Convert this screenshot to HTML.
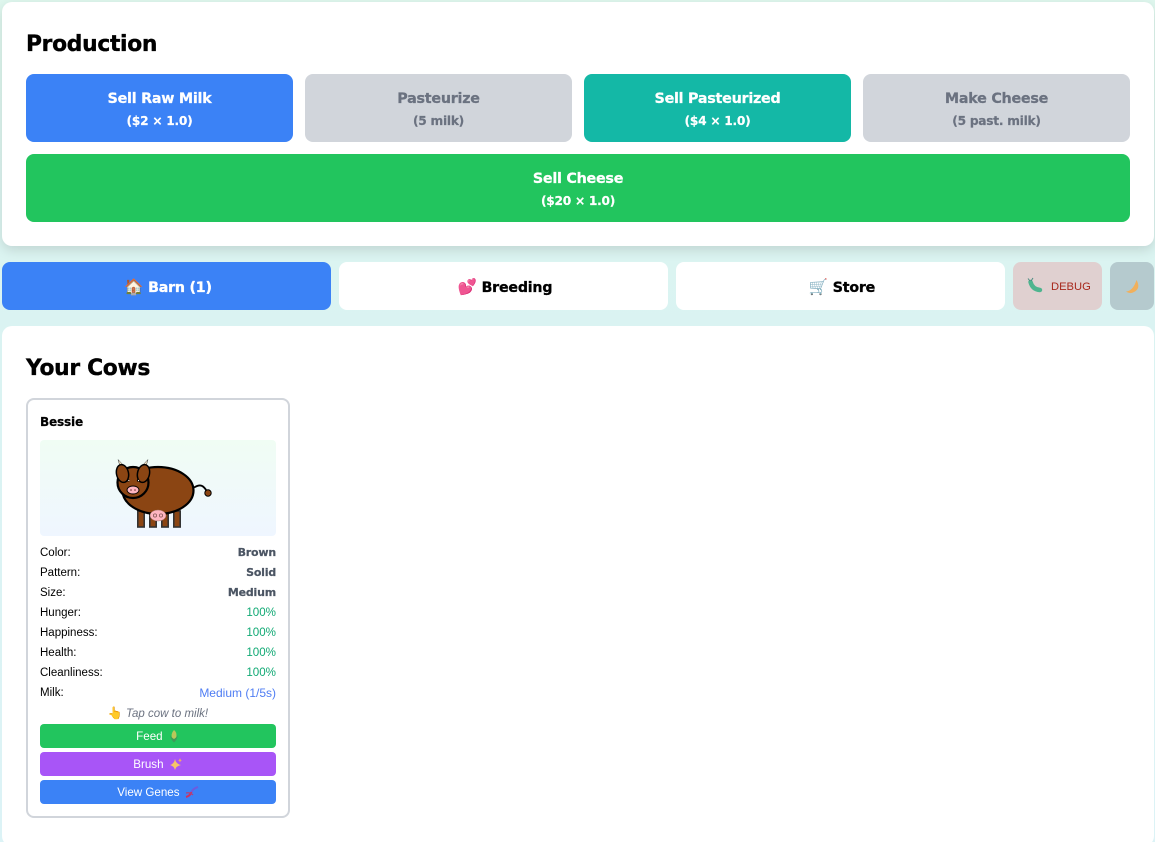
<!DOCTYPE html>
<html lang="en">
<head>
<meta charset="utf-8">
<title>Production</title>
<style>
*{box-sizing:border-box;margin:0;padding:0}
html,body{width:1155px;height:842px;overflow:hidden}
body{position:relative;background:linear-gradient(180deg,#dff7ee 0%,#daf3f2 40%,#dcf3f6 100%);font-family:"DejaVu Sans","Liberation Sans","Noto Sans CJK JP",sans-serif;color:#000}
.abs{position:absolute}
.panel{position:absolute;background:#fff;border-radius:10px}
.h{position:absolute;font-weight:700;font-size:21.8px;line-height:28px;white-space:nowrap;letter-spacing:-.3px;-webkit-text-stroke:.35px currentColor}
.btn{position:absolute;border-radius:8px;color:#fff;text-align:center;font-weight:700;height:68px}
.btn b{position:absolute;left:0;right:0;top:15px;font-size:14.3px;line-height:20px;letter-spacing:-.25px;-webkit-text-stroke:.25px currentColor}
.btn i{position:absolute;left:0;right:0;top:37px;font-style:normal;font-size:12.2px;line-height:20px;letter-spacing:-.25px;-webkit-text-stroke:.2px currentColor}
.gray{background:#d1d5db;color:#6b7280}
.tab{position:absolute;top:262px;height:48px;border-radius:8px;background:#fff;text-align:center;font-weight:700;font-size:14.2px;line-height:50px;letter-spacing:-.2px;white-space:nowrap;padding-left:3px}
.tab b{-webkit-text-stroke:.3px currentColor}
.tab em{font-style:normal;font-size:15.5px;font-weight:400}
.r{position:absolute;left:40px;width:236px;height:20px;line-height:20px;font-size:11.5px;font-family:"Liberation Sans",sans-serif;white-space:nowrap}
.r span{position:absolute;right:0;top:0}
.r .s{font-family:"DejaVu Sans",sans-serif;font-weight:700;font-size:11px;color:#4b5563;letter-spacing:-.2px;-webkit-text-stroke:.2px currentColor}
.g{color:#10a974;font-size:11.6px}.bl{color:#4f7df3;font-size:12px}
.cb{position:absolute;left:40px;width:236px;height:24px;border-radius:4px;color:#fff;text-align:center;font-family:"Liberation Sans",sans-serif;font-size:11.6px;line-height:26px;white-space:nowrap}
.cb svg{vertical-align:-3px;margin-left:2px}
</style>
</head>
<body>
<div class="panel" style="left:2px;top:2px;width:1152px;height:244px;box-shadow:0 4px 12px rgba(0,0,0,.13)"></div>
<div class="h" style="left:26px;top:31px">Production</div>
<div class="btn" style="left:26px;top:74px;width:267px;background:#3b82f6"><b>Sell Raw Milk</b><i>($2 × 1.0)</i></div>
<div class="btn gray" style="left:305px;top:74px;width:267px"><b>Pasteurize</b><i>(5 milk)</i></div>
<div class="btn" style="left:584px;top:74px;width:267px;background:#14b8a6"><b>Sell Pasteurized</b><i>($4 × 1.0)</i></div>
<div class="btn gray" style="left:863px;top:74px;width:267px"><b>Make Cheese</b><i>(5 past. milk)</i></div>
<div class="btn" style="left:26px;top:154px;width:1104px;background:#22c55e"><b>Sell Cheese</b><i>($20 × 1.0)</i></div>

<div class="tab" style="left:2px;width:329px;background:#3b82f6;color:#fff"><em>🏠</em> <b>Barn (1)</b></div>
<div class="tab" style="left:339px;width:329px"><em>💕</em> <b>Breeding</b></div>
<div class="tab" style="left:676px;width:329px"><em>🛒</em> <b>Store</b></div>
<div class="tab" style="left:1013px;width:89px;background:#e0d0d0"></div>
<div class="abs" style="left:1051px;top:278px;font-family:'Liberation Sans',sans-serif;font-size:11.2px;line-height:18px;color:#a8281c;white-space:nowrap">DEBUG</div>
<div class="tab" style="left:1110px;width:44px;background:#b5cace"></div>
<svg class="abs" style="left:1020px;top:272px" width="130" height="28" viewBox="1020 272 130 28">
  <path d="M1030.5 282 Q1032.5 289.5 1040 290" fill="none" stroke="#4fb58f" stroke-width="4.4" stroke-linecap="round"/>
  <path d="M1028 278.5 L1030 281 M1033 278 L1031 281" stroke="#4a8a80" stroke-width="1" fill="none"/>
  <path d="M1136.5 280 Q1141 288 1134.5 291.8 Q1130 294.5 1126 291.5 Q1133 291 1136.5 280Z" fill="#f1b05c"/>
</svg>

<div class="panel" style="left:2px;top:326px;width:1152px;height:520px"></div>
<div class="h" style="left:26px;top:355px">Your Cows</div>

<div class="abs" style="left:26px;top:398px;width:264px;height:420px;border:2px solid #d1d5db;border-radius:8px;background:#fff"></div>
<div class="abs" style="left:40px;top:412px;font-weight:700;font-size:12.1px;line-height:20px;letter-spacing:-.2px;-webkit-text-stroke:.2px #000">Bessie</div>
<div class="abs" style="left:40px;top:440px;width:236px;height:96px;border-radius:4px;background:linear-gradient(180deg,#f0fdf4,#eff6ff)"></div>

<svg class="abs" style="left:0;top:0" width="300" height="540" viewBox="0 0 300 540">
  <path d="M194 487.5 Q200 484 203 486.5 Q206 489 207 492" fill="none" stroke="#000" stroke-width="1.8"/>
  <circle cx="208" cy="493" r="3.2" fill="#8b4513" stroke="#000" stroke-width="1"/>
  <g fill="#8b4513" stroke="#333" stroke-width="1.6">
    <rect x="137.8" y="511" width="6.4" height="16"/>
    <rect x="149.8" y="511" width="6.4" height="16"/>
    <rect x="161.8" y="511" width="6.4" height="16"/>
    <rect x="173.8" y="511" width="6.4" height="16"/>
  </g>
  <ellipse cx="158" cy="490.5" rx="35.5" ry="23.5" fill="#8b4513" stroke="#000" stroke-width="2.2"/>
  <ellipse cx="158" cy="515.5" rx="8" ry="5.5" fill="#ffb6c1" stroke="#a87b70" stroke-width=".5"/>
  <circle cx="155" cy="515.5" r="1.6" fill="none" stroke="#8a5a5a" stroke-width=".8"/>
  <circle cx="161" cy="515.5" r="1.6" fill="none" stroke="#8a5a5a" stroke-width=".8"/>
  <circle cx="133" cy="482.5" r="15.5" fill="#8b4513" stroke="#000" stroke-width="2.2"/>
  <path d="M118 459.5 L125 467 L120.5 468Z" fill="#f2e6c8" stroke="#333" stroke-width=".5"/>
  <path d="M148 459.5 L141 467 L145.5 468Z" fill="#f2e6c8" stroke="#333" stroke-width=".5"/>
  <ellipse cx="122.5" cy="473.5" rx="6" ry="9" transform="rotate(-12 122.5 473.5)" fill="#8b4513" stroke="#000" stroke-width="1.5"/>
  <ellipse cx="143.5" cy="473.5" rx="6" ry="9" transform="rotate(12 143.5 473.5)" fill="#8b4513" stroke="#000" stroke-width="1.5"/>
  <circle cx="128.3" cy="480.5" r="1.2" fill="#000"/><circle cx="128.8" cy="480.5" r=".6" fill="#fff"/>
  <circle cx="138" cy="480.5" r="1.2" fill="#000"/><circle cx="138.5" cy="480.5" r=".6" fill="#fff"/>
  <ellipse cx="133" cy="490" rx="6" ry="4" fill="#ffb6c1" stroke="#000" stroke-width=".9"/>
  <ellipse cx="131" cy="490" rx=".9" ry=".8" fill="#7a4040"/>
  <ellipse cx="135" cy="490" rx=".9" ry=".8" fill="#7a4040"/>
</svg>

<div class="r" style="top:543px">Color:<span class="s">Brown</span></div>
<div class="r" style="top:563px">Pattern:<span class="s">Solid</span></div>
<div class="r" style="top:583px">Size:<span class="s">Medium</span></div>
<div class="r" style="top:603px">Hunger:<span class="g">100%</span></div>
<div class="r" style="top:623px">Happiness:<span class="g">100%</span></div>
<div class="r" style="top:643px">Health:<span class="g">100%</span></div>
<div class="r" style="top:663px">Cleanliness:<span class="g">100%</span></div>
<div class="r" style="top:683px">Milk:<span class="bl">Medium (1/5s)</span></div>
<div class="abs" style="left:40px;top:703px;width:236px;text-align:center;font-family:'Liberation Sans',sans-serif;font-style:italic;font-size:11.5px;line-height:20px;color:#6b7280"><span style="font-style:normal;font-size:12px">👆</span> Tap cow to milk!</div>
<div class="cb" style="top:724px;background:#22c55e">Feed <svg width="12" height="14" viewBox="0 0 12 14"><path d="M6 1 Q10 4 7.5 11 L4.5 11 Q2 5 6 1Z" fill="#b9c75a"/><path d="M2 6 Q3 11 6 13.5 Q9 11 10 6 Q8 9 6 10 Q4 9 2 6Z" fill="#3f9a58"/></svg></div>
<div class="cb" style="top:752px;background:#a855f7">Brush <svg width="14" height="14" viewBox="0 0 14 14"><path d="M6 2 Q7 7 12 8 Q7 9 6 13 Q5 9 1 8 Q5 7 6 2Z" fill="#f6c667"/><path d="M11 1 Q11.4 3 13 3.4 Q11.4 3.8 11 5.5 Q10.6 3.8 9 3.4 Q10.6 3 11 1Z" fill="#f3a86a"/></svg></div>
<div class="cb" style="top:780px;background:#3b82f6">View Genes <svg width="14" height="14" viewBox="0 0 14 14"><path d="M1 12 Q5 11 6.5 7" fill="none" stroke="#d0305f" stroke-width="2"/><path d="M6.5 7 Q8 3.5 13 2" fill="none" stroke="#6d5be0" stroke-width="2"/><path d="M1 8 Q5 7 8 10" fill="none" stroke="#b0407a" stroke-width="1.2"/></svg></div>
</body>
</html>
